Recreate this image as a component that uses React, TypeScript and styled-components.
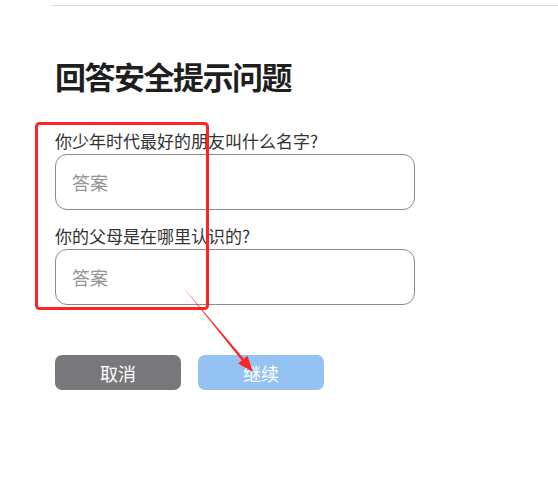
import React from "react";
import styled, { createGlobalStyle } from "styled-components";

const Global = createGlobalStyle`
  html, body { margin: 0; padding: 0; background: #fff; }
  body { font-family: "Noto Sans CJK SC", "Noto Sans", sans-serif; }
  * { box-sizing: border-box; }
`;

const Page = styled.div`
  position: relative;
  width: 558px;
  height: 479px;
  overflow: hidden;
  background: #fff;
`;

const TopRule = styled.div`
  margin-left: 52px;
  margin-top: 5px;
  height: 1px;
  background: #d9d9d9;
`;

const Content = styled.div`
  display: flex;
  flex-direction: column;
  padding-left: 55px;
  width: 415px;
`;

const Title = styled.h1`
  margin: 51px 0 0 0;
  font-size: 31px;
  line-height: 37px;
  letter-spacing: -1.5px;
  font-weight: 700;
  color: #1f1f1f;
`;

const Field = styled.div<{ $first?: boolean }>`
  display: flex;
  flex-direction: column;
  gap: 2px;
  margin-top: ${(p) => (p.$first ? "36px" : "15px")};
`;

const Label = styled.label`
  font-size: 17px;
  line-height: 22px;
  color: #333;
`;

const Input = styled.input`
  width: 360px;
  height: 56px;
  border: 1px solid #8a8a8a;
  border-radius: 12px;
  padding: 0 16px;
  font-family: inherit;
  font-size: 18px;
  color: #333;
  outline: none;
  background: #fff;
  &::placeholder { color: #949494; }
`;

const Actions = styled.div`
  display: flex;
  gap: 17px;
  margin-top: 50px;
`;

const Button = styled.button<{ $variant: "cancel" | "primary" }>`
  width: 126px;
  height: 35px;
  border: none;
  border-radius: 7px;
  font-family: inherit;
  font-size: 18px;
  color: #fff;
  background: ${(p) => (p.$variant === "cancel" ? "#78777c" : "#94c2f2")};
  cursor: pointer;
`;

const Annotation = styled.svg`
  position: absolute;
  left: 0;
  top: 0;
  pointer-events: none;
`;

export default function App() {
  return (
    <Page>
      <Global />
      <TopRule />
      <Content>
        <Title>回答安全提示问题</Title>
        <Field $first>
          <Label>你少年时代最好的朋友叫什么名字?</Label>
          <Input placeholder="答案" />
        </Field>
        <Field>
          <Label>你的父母是在哪里认识的?</Label>
          <Input placeholder="答案" />
        </Field>
        <Actions>
          <Button $variant="cancel">取消</Button>
          <Button $variant="primary">继续</Button>
        </Actions>
      </Content>
      <Annotation width="558" height="479" viewBox="0 0 558 479">
        <rect x="36.5" y="123.5" width="171" height="185" rx="3" fill="none" stroke="#ff2323" strokeWidth="3" />
        <polygon
          points="183,287 243.8,358.8 247.4,355.8 253,372 238.2,363.4 241.8,360.4"
          fill="#ff2323"
        />
      </Annotation>
    </Page>
  );
}
